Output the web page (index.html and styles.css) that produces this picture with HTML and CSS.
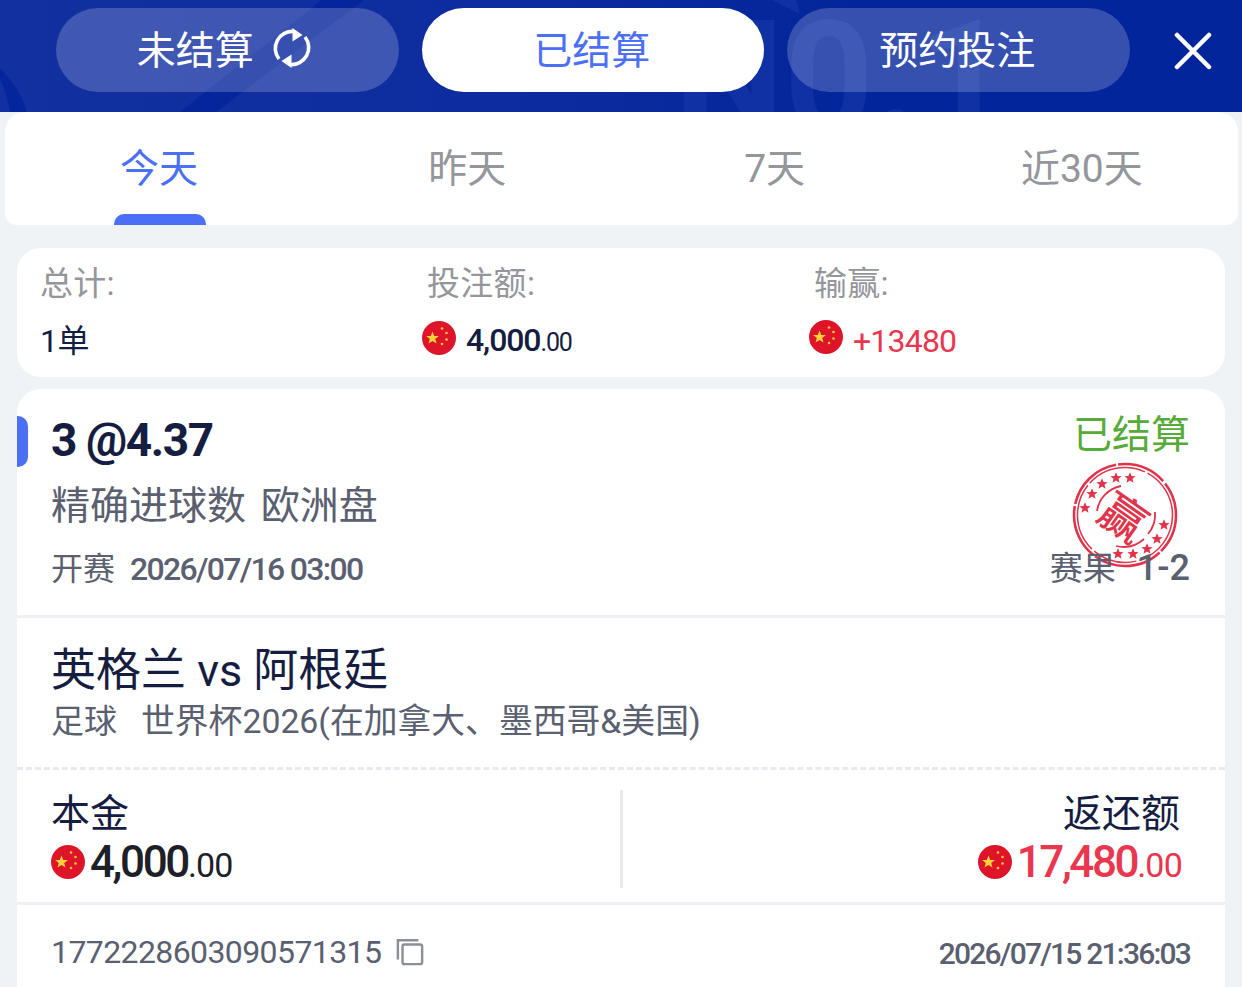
FILE: index.html
```html
<!DOCTYPE html>
<html lang="zh-CN">
<head>
<meta charset="utf-8">
<title>已结算</title>
<link rel="stylesheet" href="styles.css">
</head>
<body>
<div class="page">
  <header class="top">
    <svg class="deco" width="1242" height="112" viewBox="0 0 1242 112" aria-hidden="true">
      <path d="M180 112 L322 0 L364 0 L216 112Z" fill="#05259c"/>
      <path d="M0 68 Q20 88 27 112 L10 112 Q6 90 0 80Z" fill="#05259c"/>
      <path d="M772 0L800 14 796 0Z" fill="#0f31a4"/>
    </svg>
    <span class="watermark">N0.1</span>
    <nav class="pills">
      <a class="pill pill-first">未结算
        <svg class="spin" width="40" height="40" viewBox="0 0 40 40"><path d="M7 31A17 17 0 0 1 22 3.500M33 9A17 17 0 0 1 18 36.500" fill="none" stroke="#fff" stroke-width="3.600"/><path d="M20.500 0L30.500 7 20.500 13.500ZM19.500 40L9.500 33 19.500 26.500Z" fill="#fff"/></svg>
      </a>
      <a class="pill pill-on">已结算</a>
      <a class="pill">预约投注</a>
    </nav>
    <svg class="close" width="38" height="38" viewBox="0 0 38 38"><path d="M3 3L35 35M35 3L3 35" stroke="#fff" stroke-width="4.500" stroke-linecap="round"/></svg>
  </header>

  <div class="days">
    <div class="day day-on">今天<i class="bar"></i></div>
    <div class="day">昨天</div>
    <div class="day">7天</div>
    <div class="day">近30天</div>
  </div>

  <section class="summary">
    <div class="sum-col">
      <div class="sum-label">总计:</div>
      <div class="sum-val sum-count">1单</div>
    </div>
    <div class="sum-col">
      <div class="sum-label">投注额:</div>
      <div class="sum-val shift">
        <svg class="flag flag-sm" viewBox="0 0 34 34"><use href="#cn"/></svg>
        <span class="amt">4,000<small>.00</small></span>
      </div>
    </div>
    <div class="sum-col">
      <div class="sum-label">输赢:</div>
      <div class="sum-val shift">
        <svg class="flag flag-sm" viewBox="0 0 34 34"><use href="#cn"/></svg>
        <span class="amt win">+13480</span>
      </div>
    </div>
  </section>

  <section class="ticket">
    <i class="marker"></i>
    <div class="t-head">
      <div class="t-row">
        <div class="odds">3 @4.37</div>
        <div class="status">已结算</div>
      </div>
      <div class="market">精确进球数 欧洲盘</div>
      <div class="t-row t-last">
        <div class="kick"><span class="kick-l">开赛</span>2026/07/16 03:00</div>
        <div class="score"><span class="score-l">赛果</span>1-2</div>
      </div>
      <svg class="stamp" width="106" height="106" viewBox="0 0 106 106">
        <g fill="none" stroke="#e0344a">
          <circle cx="53" cy="53" r="51" stroke-width="2.600" stroke-dasharray="40 2 70 2 55 2 60 2 50 3"/>
          <circle cx="53" cy="53" r="47.500" stroke-width="1.500" stroke-dasharray="60 3 45 3 70 3 60 3"/>
          <path d="M25 49A30 30 0 0 1 49 24" stroke-width="1.800"/>
          <path d="M83 50A30 30 0 0 1 76 72" stroke-width="1.800"/>
          <path d="M72 77A31 31 0 0 1 44 84" stroke-width="1.800"/>
        </g>
        <g fill="#e0344a">
          <use href="#st" x="13" y="46"/><use href="#st" x="20" y="32"/><use href="#st" x="30" y="22"/><use href="#st" x="44" y="16"/><use href="#st" x="58" y="16"/>
          <use href="#st" x="92" y="63"/><use href="#st" x="85" y="77"/><use href="#st" x="75" y="87"/><use href="#st" x="61" y="92"/><use href="#st" x="46" y="92"/>
        </g>
        <text class="stamp-ch" x="53" y="53" transform="rotate(35 53 53)" text-anchor="middle" dominant-baseline="central">赢</text>
      </svg>
    </div>

    <div class="match">
      <div class="teams">英格兰 vs 阿根廷</div>
      <div class="league"><span class="sport">足球</span>世界杯2026(在加拿大、墨西哥&amp;美国)</div>
    </div>

    <div class="money">
      <div class="m-col">
        <div class="m-label">本金</div>
        <div class="m-val">
          <svg class="flag" viewBox="0 0 34 34"><use href="#cn"/></svg>
          <span class="big">4,000<small>.00</small></span>
        </div>
      </div>
      <div class="m-col m-right">
        <div class="m-label">返还额</div>
        <div class="m-val">
          <svg class="flag" viewBox="0 0 34 34"><use href="#cn"/></svg>
          <span class="big red">17,480<small>.00</small></span>
        </div>
      </div>
    </div>

    <div class="foot">
      <div class="order">1772228603090571315
        <svg class="copy" width="28" height="28" viewBox="0 0 30 30" fill="none" stroke="#8c8f96" stroke-width="2.600"><path d="M2 23V2.500H24"/><rect x="7" y="7" width="21" height="21" rx="2"/></svg>
      </div>
      <div class="stamp-time">2026/07/15 21:36:03</div>
    </div>
  </section>

  <svg class="defs" width="0" height="0" aria-hidden="true">
    <symbol id="cn" viewBox="0 0 34 34">
      <circle cx="17" cy="17" r="17" fill="#de1429"/>
      <path d="M10.500 10.500l1.700 4.400 4.700.2-3.700 2.900 1.300 4.500-4-2.600-4 2.600 1.300-4.500-3.700-2.900 4.700-.2z" fill="#ffd23c"/>
      <g fill="#ffc83c"><circle cx="20" cy="7.500" r="1.300"/><circle cx="24.500" cy="12" r="1.300"/><circle cx="24.500" cy="18.500" r="1.300"/><circle cx="20" cy="23" r="1.300"/></g>
    </symbol>
    <symbol id="st" overflow="visible">
      <path d="M0 -5.800L1.600 -2 5.600 -1.800 2.500 .8 3.500 4.800 0 2.600 -3.500 4.800 -2.500 .8 -5.600 -1.800 -1.600 -2Z"/>
    </symbol>
  </svg>
</div>
</body>
</html>
```
FILE: styles.css
```css
* { box-sizing: border-box; }
html, body { margin: 0; padding: 0; }
body {
  width: 1242px;
  height: 987px;
  overflow: hidden;
  background: #eff3f6;
  font-family: Roboto, "Noto Sans CJK SC", sans-serif;
}
.page { display: flex; flex-direction: column; height: 987px; overflow: hidden; }

.top {
  position: relative;
  height: 112px;
  flex: none;
  background: linear-gradient(90deg, #12309f 0%, #0d2c9f 40%, #03259b 70%);
  overflow: hidden;
  display: flex;
  align-items: flex-start;
  padding: 8px 0 0 56px;
}
.deco { position: absolute; left: 0; top: 0; }
.watermark {
  position: absolute;
  left: 674px;
  top: 0;
  font: 700 156px/156px Roboto, sans-serif;
  color: #0f31a4;
}
.pills { position: relative; display: flex; gap: 23px; }
.pill {
  width: 342.500px;
  height: 84px;
  border-radius: 42px;
  background: rgba(255, 255, 255, .2);
  color: #fff;
  font-size: 39px;
  display: flex;
  align-items: center;
  justify-content: center;
  gap: 18px;
  padding: 0 2px 7px 0;
}
.pill-first { padding-right: 6px; }
.pill-on { background: #fff; color: #4c70f5; }
.spin { flex: none; margin-top: 3px; }
.close { position: absolute; left: 1174px; top: 32px; }

.days {
  flex: none;
  margin: 0 4px 0 5px;
  height: 113px;
  background: #fff;
  border-radius: 20px 20px 12px 12px;
  display: grid;
  grid-template-columns: repeat(4, 1fr);
  padding: 0 2.500px 0 1.500px;
  position: relative;
  z-index: 1;
}
.day {
  position: relative;
  display: flex;
  justify-content: center;
  padding-top: 33px;
  font-size: 39px;
  line-height: 48px;
  color: #94969b;
}
.day-on { color: #4c70f5; padding-right: 2px; }
.bar {
  position: absolute;
  left: 50%;
  bottom: 0;
  width: 92px;
  height: 11px;
  margin-left: -46px;
  background: #4c70f5;
  border-radius: 10px 10px 0 0;
}

.summary {
  flex: none;
  margin: 23px 17px 12px;
  height: 129px;
  background: #fff;
  border-radius: 24px;
  padding: 15px 0 0 23px;
  display: grid;
  grid-template-columns: repeat(3, 387px);
}
.sum-label { font-size: 33px; line-height: 42px; color: #94969b; letter-spacing: .3px; }
.sum-val {
  margin-top: 14px;
  font-size: 32px;
  line-height: 40px;
  font-weight: 500;
  color: #151d41;
  display: flex;
  align-items: center;
  gap: 10px;
  letter-spacing: -1.100px;
}
.sum-count { font-weight: 400; padding-top: 2px; letter-spacing: -.6px; }
.shift { margin-left: -5px; }
.flag-sm { margin-bottom: 6px; }
.amt { margin-top: 1px; }
.amt small { font-size: 25px; font-weight: 400; }
.win { color: #e8374f; font-weight: 400; letter-spacing: -.8px; margin-top: 2px; }
.flag { width: 34px; height: 34px; flex: none; }

.ticket {
  position: relative;
  flex: none;
  margin: 0 17px;
  background: #fff;
  border-radius: 24px 24px 0 0;
  height: 620px;
}
.marker {
  position: absolute;
  left: 0;
  top: 27px;
  width: 11px;
  height: 51px;
  background: #4c70f5;
  border-radius: 0 10px 10px 0;
}
.t-head {
  position: relative;
  height: 229px;
  padding: 22px 35px 0 34px;
  border-bottom: 3px solid #eef0f6;
}
.t-row { display: flex; justify-content: space-between; align-items: flex-start; }
.odds { font-size: 46px; line-height: 58px; font-weight: 700; color: #151d41; letter-spacing: -1.400px; }
.status { font-size: 39px; line-height: 48px; color: #57ab38; }
.market { font-size: 39px; line-height: 46px; color: #5a6070; margin-top: 14px; word-spacing: 5px; }
.t-last { margin-top: 18px; position: relative; z-index: 1; }
.kick { font-size: 32px; line-height: 44px; color: #5a6070; letter-spacing: -1.700px; font-weight: 500; }
.kick-l { margin-right: 15px; letter-spacing: 0; font-weight: 400; }
.score { font-size: 36px; line-height: 44px; color: #5a6070; font-weight: 500; margin-top: -1px; }
.score-l { font-size: 33px; font-weight: 400; margin-right: 21px; }
.stamp { position: absolute; left: 1055px; top: 73px; }
.stamp-ch { font: 500 46px "Noto Sans CJK SC", sans-serif; fill: #e0344a; }

.match {
  height: 152px;
  padding: 25px 35px 0 34px;
  border-bottom: 3px dashed #e8eaf0;
}
.teams { font-size: 45px; line-height: 56px; color: #151d41; }
.league { font-size: 33.800px; line-height: 42px; color: #5a6070; margin-top: 2px; }
.sport { font-size: 33px; margin-right: 24px; }

.money {
  display: grid;
  grid-template-columns: 603px 1fr;
  height: 135px;
  border-bottom: 3px solid #eef0f6;
  padding-top: 20px;
}
.m-col { padding-left: 34px; height: 98px; }
.m-right { border-left: 3px solid #e8eaf0; padding: 0 45px 0 0; text-align: right; }
.m-label { font-size: 39px; line-height: 48px; color: #151d41; }
.m-val { display: flex; align-items: center; gap: 5px; }
.m-val .flag { margin-bottom: 4px; }
.m-right .m-val { justify-content: flex-end; margin-right: -2px; }
.big { font-size: 44px; line-height: 48px; font-weight: 500; color: #1d2027; letter-spacing: -2.400px; }
.big small { font-size: 34px; font-weight: 400; letter-spacing: -.8px; }
.red { color: #e8374f; }

.foot {
  display: flex;
  justify-content: space-between;
  padding: 22px 35px 0 34px;
  font-size: 32px;
  line-height: 44px;
  color: #5a6070;
}
.order { display: flex; align-items: center; gap: 15px; letter-spacing: -.6px; }
.stamp-time { font-weight: 500; letter-spacing: -1.800px; font-size: 30px; margin-top: 5px; }
.copy { flex: none; }
.defs { position: absolute; }
```
